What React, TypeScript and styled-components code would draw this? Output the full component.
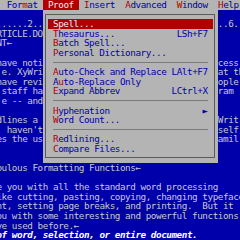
import React from "react";
import styled, { createGlobalStyle } from "styled-components";

// one text cell of the old 80x25 screen, scaled down
const CW = 5.15;
const LH = 9.6;
const FS = 9.3;

const GlobalStyle = createGlobalStyle`
  html, body {
    margin: 0;
    padding: 0;
    background: #0000aa;
    overflow: hidden;
  }
  #root {
    width: 240px;
    height: 240px;
    overflow: hidden;
  }
`;

const Screen = styled.div`
  position: relative;
  width: 252px;
  margin-left: -${CW - 1.55}px;
  font-family: "DejaVu Sans Mono", "Liberation Mono", monospace;
  font-size: ${FS}px;
  letter-spacing: ${CW - FS * 0.602}px;
  line-height: ${LH}px;
  white-space: pre;
  color: #c8c8d0;
  background: #0000aa;
`;

const MenuBar = styled.div`
  display: flex;
  height: ${LH}px;
  background: #b4b4b4;
  color: #0000aa;
`;

const MenuTitle = styled.span<{ $active?: boolean }>`
  background: ${(p) => (p.$active ? "#b00000" : "transparent")};
  color: ${(p) => (p.$active ? "#ececec" : "#0000aa")};
`;

const Hot = styled.span<{ $plain?: boolean }>`
  color: ${(p) => (p.$plain ? "inherit" : "#b00000")};
`;

const Doc = styled.div`
  display: flex;
  flex-direction: column;
`;

const Line = styled.div<{ $em?: boolean }>`
  display: flex;
  height: ${LH}px;
  color: ${(p) => (p.$em ? "#ffffff" : "#c8c8d0")};
  font-style: ${(p) => (p.$em ? "italic" : "normal")};
  font-weight: ${(p) => (p.$em ? "bold" : "normal")};
`;

// the part of a line left of the open menu: columns -1..7
const LeftCell = styled.span`
  width: ${9 * CW}px;
  overflow: hidden;
`;

// the part hidden under the menu: columns 8..41
const HiddenCell = styled.span`
  width: ${34 * CW}px;
`;

const Dropdown = styled.div`
  position: absolute;
  left: ${9 * CW}px;
  top: ${LH}px;
  width: ${34 * CW}px;
  height: ${16 * LH}px;
  box-sizing: border-box;
  padding: ${LH / 2}px ${CW / 2}px;
  background: #b4b4b4;
  color: #0000aa;
`;

const Frame = styled.div`
  height: 100%;
  box-sizing: border-box;
  border: 1px solid #5a5a5a;
  padding: ${LH / 2 - 1}px ${CW / 2 - 1}px 0;
  display: flex;
  flex-direction: column;
`;

const Item = styled.div<{ $active?: boolean }>`
  display: flex;
  justify-content: space-between;
  height: ${LH}px;
  padding: 0 ${CW}px;
  background: ${(p) => (p.$active ? "#b00000" : "transparent")};
  color: ${(p) => (p.$active ? "#ececec" : "#0000aa")};
`;

const Separator = styled.div`
  height: ${LH}px;
  display: flex;
  align-items: center;
  padding: 0 ${CW}px;

  &::after {
    content: "";
    flex: 1;
    height: 1px;
    background: #7a7a7a;
  }
`;

const titles = [
  { name: "Format", hot: 3 },
  { name: "Proof", hot: 0, active: true },
  { name: "Insert", hot: 0 },
  { name: "Advanced", hot: 0 },
  { name: "Window", hot: 0 },
  { name: "Help", hot: 0 },
];

type Entry =
  | "sep"
  | { label: string; hot: number; key?: string; sub?: boolean; active?: boolean };

const entries: Entry[] = [
  { label: "Spell...", hot: 0, active: true },
  { label: "Thesaurus...", hot: 0, key: "LSh+F7" },
  { label: "Batch Spell...", hot: 0 },
  { label: "Personal Dictionary...", hot: 0 },
  "sep",
  { label: "Auto-Check and Replace", hot: 0, key: "LAlt+F7" },
  { label: "Auto-Replace Only", hot: 1 },
  { label: "Expand Abbrev", hot: 0, key: "LCtrl+X" },
  "sep",
  { label: "Hyphenation", hot: 0, sub: true },
  { label: "Word Count...", hot: 0 },
  "sep",
  { label: "Redlining...", hot: 0 },
  { label: "Compare Files...", hot: 0 },
];

type DocLine = { left?: string; right?: string; full?: string; em?: boolean };

const docLines: DocLine[] = [
  {},
  { left: "......2..", right: "..6.." },
  { left: "RTICLE.DO" },
  { left: "NT\u2190" },
  {},
  { left: "have noti", right: "cess" },
  { left: " e. XyWri", right: "at th" },
  { left: "have revi", right: "ople" },
  { left: " staff ha", right: "ram ." },
  { left: " e -- and" },
  {},
  { left: "dlines a", right: "Writ" },
  { left: "  haven't", right: "self" },
  { left: "es the us", right: "amil" },
  {},
  {},
  { full: "bulous Formatting Functions\u2190" },
  {},
  { full: "e you with all the standard word processing" },
  { full: "ike cutting, pasting, copying, changing typeface" },
  { full: "nt, setting page breaks, and printing.  But it" },
  { full: "ou with some interesting and powerful functions" },
  { full: "ve used before.\u2190" },
  { full: "of word, selection, or entire document.", em: true },
];

function Label({ text, hot, plain }: { text: string; hot: number; plain?: boolean }) {
  return (
    <span>
      {text.slice(0, hot)}
      <Hot $plain={plain}>{text[hot]}</Hot>
      {text.slice(hot + 1)}
    </span>
  );
}

export default function App() {
  return (
    <>
      <GlobalStyle />
      <Screen>
        <MenuBar>
          <span> </span>
          {titles.map((t) => (
            <MenuTitle key={t.name} $active={t.active}>
              {" "}
              <Label text={t.name} hot={t.hot} plain={t.active} />{" "}
            </MenuTitle>
          ))}
        </MenuBar>

        <Doc>
          {docLines.map((l, i) => (
            <Line key={i} $em={l.em}>
              {l.full ?? (
                <>
                  <LeftCell>{l.left ?? ""}</LeftCell>
                  <HiddenCell />
                  <span>{l.right ?? ""}</span>
                </>
              )}
            </Line>
          ))}
        </Doc>

        <Dropdown>
          <Frame>
            {entries.map((e, i) =>
              e === "sep" ? (
                <Separator key={i} />
              ) : (
                <Item key={i} $active={e.active}>
                  <Label text={e.label} hot={e.hot} plain={e.active} />
                  <span>{e.sub ? "\u25ba" : e.key ?? ""}</span>
                </Item>
              )
            )}
          </Frame>
        </Dropdown>
      </Screen>
    </>
  );
}
